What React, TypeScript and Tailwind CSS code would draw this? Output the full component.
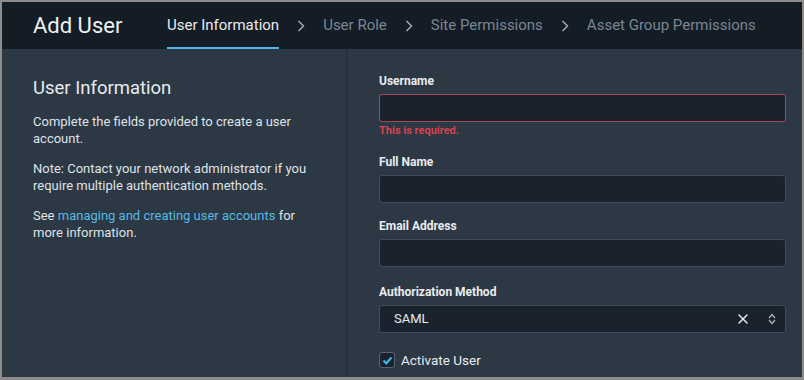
import { X } from "lucide-react";

const steps = ["User Information", "User Role", "Site Permissions", "Asset Group Permissions"];

const Chevron = () => (
  <svg width="8" height="14" viewBox="0 0 8 14" className="mx-[18px]">
    <path d="M1.5 2l5 5-5 5" fill="none" stroke="#a9b3bd" strokeWidth="1.4" />
  </svg>
);

const Field = ({ label, error }: { label: string; error?: string }) => (
  <div className="flex flex-col">
    <label className="text-[12px] font-bold text-[#e9ecef] leading-[14px] mb-[6px]">{label}</label>
    <div
      className={
        error
          ? "h-[28px] rounded-[3px] border border-[#a8474f] bg-[#1a232d]"
          : "h-[28px] rounded-[3px] border border-[#3f4c59] bg-[#1a232d]"
      }
    />
    {error && <div className="mt-[2px] text-[11px] font-bold text-[#d7424f] leading-[14px]">{error}</div>}
  </div>
);

export default function App() {
  return (
    <div
      className="w-[804px] h-[380px] flex flex-col border-2 border-b-[3px] border-[#8d8d8d] bg-[#2c3844] overflow-hidden"
      style={{ fontFamily: "Roboto, 'Liberation Sans', sans-serif" }}
    >
      <header className="h-[47px] shrink-0 bg-[#141d26] flex items-stretch">
        <h1 className="pl-[31px] w-[165px] flex items-center text-[22px] text-[#eef0f2]">Add User</h1>
        <nav className="flex items-stretch">
          {steps.map((s, i) => (
            <div key={s} className="flex items-center">
              {i > 0 && <Chevron />}
              <div
                className={
                  i === 0
                    ? "h-full flex items-center text-[15px] text-[#e8ebee] border-b-2 border-[#4fb6e5] pt-[2px]"
                    : "h-full flex items-center text-[15px] text-[#7a8794] border-b-2 border-transparent pt-[2px]"
                }
              >
                {s}
              </div>
            </div>
          ))}
        </nav>
      </header>
      <div className="flex flex-1 min-h-0">
        <aside className="w-[346px] shrink-0 border-r-2 border-[#27323c] pl-[31px] pr-[20px] pt-[28px] text-[#dfe3e7]">
          <h2 className="text-[18.5px] leading-[22px] text-[#e8ebee]">User Information</h2>
          <p className="mt-[14px] text-[13px] leading-[17px]">Complete the fields provided to create a user account.</p>
          <p className="mt-[13px] text-[13px] leading-[17px]">
            Note: Contact your network administrator if you require multiple authentication methods.
          </p>
          <p className="mt-[13px] text-[13px] leading-[17px]">
            See <span className="text-[#56b9e4]">managing and creating user accounts</span> for more information.
          </p>
        </aside>
        <main className="flex-1 pl-[31px] pr-[16px] pt-[25px] flex flex-col">
          <Field label="Username" error="This is required." />
          <div className="mt-[17px]">
            <Field label="Full Name" />
          </div>
          <div className="mt-[16px]">
            <Field label="Email Address" />
          </div>
          <div className="mt-[18px] flex flex-col">
            <label className="text-[12px] font-bold text-[#e9ecef] leading-[14px] mb-[6px]">Authorization Method</label>
            <div className="h-[28px] rounded-[3px] border border-[#3f4c59] bg-[#1a232d] flex items-center pl-[14px] pr-[9px]">
              <span className="flex-1 text-[13px] text-[#e8ebee]">SAML</span>
              <X size={16} strokeWidth={2.2} className="text-[#e8ebee] mr-[17px]" />
              <svg width="8" height="12" viewBox="0 0 8 12">
                <path d="M1 5l3-3.5L7 5M1 7l3 3.5L7 7" fill="none" stroke="#aeb7c0" strokeWidth="1.2" />
              </svg>
            </div>
          </div>
          <div className="mt-[17px] flex items-center">
            <div className="w-[16px] h-[16px] rounded-[3px] border border-[#59636e] bg-[#1a232d] flex items-center justify-center">
              <svg width="11" height="9" viewBox="0 0 11 9">
                <path d="M1.5 4.5l2.8 2.8L9.5 1.5" fill="none" stroke="#41b3ea" strokeWidth="2.2" />
              </svg>
            </div>
            <span className="ml-[6px] text-[13.5px] text-[#e8ebee]">Activate User</span>
          </div>
        </main>
      </div>
    </div>
  );
}
